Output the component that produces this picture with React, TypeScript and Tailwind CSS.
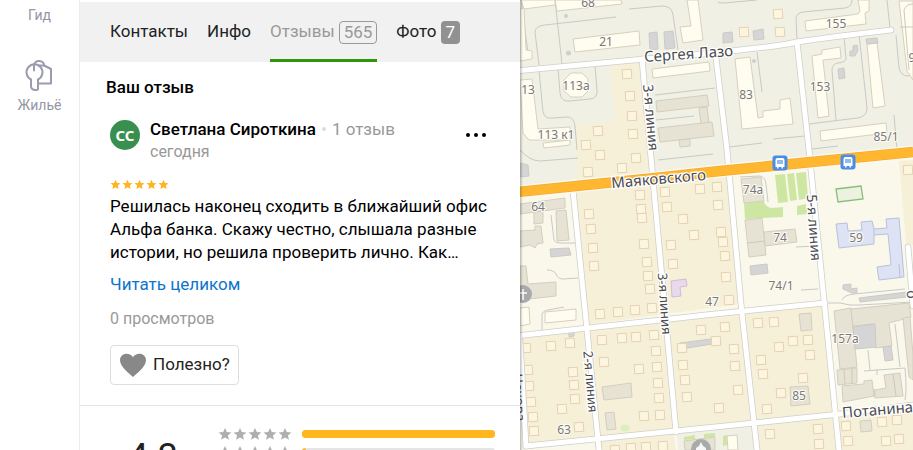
type Point = [number, number];

const STAR = "M12 1.5 L15.1 8.6 L23 9.3 L17 14.4 L18.8 22 L12 18 L5.2 22 L7 14.4 L1 9.3 L8.9 8.6 Z";

function Stars({ className, starClassName, label }: { className: string; starClassName: string; label: string }) {
  return (
    <div role="img" aria-label={label} className={className}>
      {[0, 1, 2, 3, 4].map((i) => (
        <svg key={i} viewBox="0 0 24 24" className={starClassName} fill="currentColor">
          <path d={STAR} />
        </svg>
      ))}
    </div>
  );
}

function KeysIcon() {
  return (
    <svg viewBox="0 0 30 36" className="h-9 w-[30px]" fill="none" stroke="#9a9cae" strokeWidth="2" strokeLinejoin="round" strokeLinecap="round">
      <path d="M10 8 A5.200 5.200 0 0 1 20.200 8.500 L27 12 V26.500 H15.500" />
      <path d="M7 22.500 A8 8 0 1 1 14 22.500 V32 Q14 33 12.500 33 H11 Q7 32.500 7 29 Z" />
      <path d="M10 8 V13.500" />
      <path d="M15.500 8.500 H20" />
    </svg>
  );
}

function Sidebar() {
  return (
    <nav className="flex w-20 shrink-0 flex-col items-center border-r border-[#ececec] bg-white pt-[5px] text-sm leading-5 text-[#9496a5]">
      <a href="#guide">Гид</a>
      <a href="#housing" className="mt-8 flex flex-col items-center">
        <KeysIcon />
        <span className="mt-0.5">Жильё</span>
      </a>
    </nav>
  );
}

function Tabs() {
  return (
    <nav className="mt-0.5 flex h-[60px] shrink-0 gap-[19px] bg-[#f1f1f1] pl-[30px] text-[17px] text-[#222]">
      <a href="#contacts" className="flex items-center">Контакты</a>
      <a href="#info" className="flex items-center">Инфо</a>
      <a href="#reviews" aria-current="page" className="flex items-center gap-1 border-b-[3px] border-[#2e9408] pt-[3px] text-[#999]">
        Отзывы
        <span className="rounded-[4px] border border-[#999] px-1 leading-[21px]">565</span>
      </a>
      <a href="#photos" className="flex items-center gap-1">
        Фото
        <span className="rounded-[4px] bg-[#919191] px-[5px] leading-[23px] text-white">7</span>
      </a>
    </nav>
  );
}

function Review() {
  return (
    <article className="px-[30px] pt-3">
      <header className="flex">
        <span className="mt-2.5 flex size-[30px] items-center justify-center rounded-full bg-[#398f4f] font-['Noto_Sans',sans-serif] text-[15px] font-bold text-white">
          СС
        </span>
        <div className="ml-2.5 pt-2 leading-[22px]">
          <div className="flex items-center whitespace-nowrap">
            <span className="font-medium">Светлана Сироткина</span>
            <span className="mx-1.5 size-1 rounded-full bg-[#dcdcdc]" />
            <span className="text-[#999]">1 отзыв</span>
          </div>
          <time className="block text-base leading-6 text-[#999]">сегодня</time>
        </div>
        <button type="button" aria-label="Ещё" className="-mr-px mt-[15px] ml-auto flex h-5 w-[30px] items-center justify-center gap-1">
          <span className="size-1 rounded-full bg-black" />
          <span className="size-1 rounded-full bg-black" />
          <span className="size-1 rounded-full bg-black" />
        </button>
      </header>
      <Stars label="Оценка 5 из 5" className="mt-[15px] flex gap-px text-[#ffb31f]" starClassName="size-[11px]" />
      <p className="mt-[5px] leading-[23px] text-black">
        Решилась наконец сходить в ближайший офис Альфа банка. Скажу честно, слышала разные истории, но решила проверить лично. Как…
      </p>
      <a href="#full" className="mt-2 block leading-[24px] text-[#0c74cd]">Читать целиком</a>
      <p className="mt-3 text-base leading-[22px] text-[#999]">0 просмотров</p>
      <button type="button" className="mt-[15px] flex h-10 items-center gap-1.5 rounded-[4px] border border-[#dedede] px-2 text-[#222]">
        <svg viewBox="0 0 28 26" className="h-[26px] w-7" fill="#888">
          <path d="M14 25 C11 22 1 15 1 8.2 C1 4.4 4 1.8 7.6 1.8 C10.4 1.8 12.8 3.2 14 5.2 C15.2 3.2 17.6 1.8 20.4 1.8 C24 1.8 27 4.4 27 8.2 C27 15 17 22 14 25 Z" />
        </svg>
        Полезно?
      </button>
    </article>
  );
}

function Rating() {
  return (
    <section className="mt-5 flex border-t border-[#e4e4e4] pt-[21px]">
      <div className="ml-12 w-[90px] pt-3 text-4xl leading-9 text-[#222]">4.3</div>
      <div className="flex grow flex-col gap-1 pr-[25px]">
        {[100, 2].map((share) => (
          <div key={share} className="flex items-center gap-2.5">
            <Stars label={share === 100 ? "5 звёзд" : "4 звезды"} className="flex gap-px text-[#afafaf]" starClassName="size-3.5" />
            <div className="h-2 grow overflow-hidden rounded-[3px] bg-[#e5e5e5]">
              <div className="h-full rounded-[3px] bg-[#ffb61f]" style={{ width: `${share}%` }} />
            </div>
          </div>
        ))}
      </div>
    </section>
  );
}

const zones: { d: string; fill: string }[] = [
  { d: "M520 192 L728 170 L913 152 V450 H520 Z", fill: "#faf8eb" },
  { d: "M610 65 L642 60 L653 178 L578 186 L575 125 L615 121 Z", fill: "#f6f0d9" },
  { d: "M574 187 L729 170 L741 304 L584 325 Z", fill: "#f6f0d9" },
  { d: "M520 336 L741 311 L754 422 L526 446 Z", fill: "#f6f0d9" },
  { d: "M745 311 L824 303 L834 415 L757 423 Z", fill: "#f6f0d9" },
  { d: "M600 439 L673 431 L676 450 H600 Z", fill: "#f6f0d9" },
  { d: "M756 424 L835 416 L840 450 H758 Z", fill: "#f6f0d9" },
  { d: "M838 417 L913 408 V450 H840 Z", fill: "#f6f0d9" },
  { d: "M899 161 L913 160 V245 L906 243 Z", fill: "#f6f0d9" },
  { d: "M677 431 L754 423 L758 450 H678 Z", fill: "#f1f0e4" },
];

const greens = [
  "M775 175 L785 174 L788 202 L778 203 Z",
  "M787 174 L794 173 L797 200 L790 201 Z",
  "M796 173 L806 172 L808 198 L799 200 Z",
  "M797 206 L806 204 L808 214 L797 215 Z",
  "M744 203 L763 200 Q766 208 772 208 L783 207 V217 L745 219 Z",
  "M684 437 L695 435 V439 L684 440 Z",
  "M704 434 L715 433 V437 L704 438 Z",
  "M723 436 L727 435 V445 L723 446 Z",
];

const thinPaths = [
  "M521 0 L529 60",
  "M555 0 L562 64",
  "M539 65 L535 32 Q535 26 545 25 L616 17",
  "M629 9 L662 6 Q672 6 673 15 L678 50",
  "M539 70 L543 112 Q545 119 552 118 L568 117 Q574 118 575 126 L577 150",
  "M558 68 L560 93 Q561 102 570 101 L590 99 Q598 98 597 90 L595 66",
  "M655 95 L715 88",
  "M656 120 L694 116",
  "M718 2 Q719 3 724 3 L757 0",
  "M797 40 L796 19 Q796 13 803 12 L845 8 Q852 7 852 0",
  "M757 52 L762 92",
  "M729 147 L762 143",
  "M773 139 L805 136",
  "M844 36 L846 59 Q846 62 838 63 Q832 64 832 70 L836 120",
  "M859 34 L867 108 Q867 117 857 118 L809 124",
  "M887 0 L890 28",
  "M896 35 L899 68 Q901 76 908 76 L913 75",
  "M894 115 L897 150",
  "M812 149 L838 146",
  "M520 150 Q530 161 540 161 L578 158",
  "M658 160 L713 154",
  "M551 215 L554 240 Q555 243 560 243 L576 243",
  "M547 270 Q554 270 556 274 Q558 279 563 279 L578 278",
  "M740 177 L759 176 Q765 176 766 184 L768 202",
  "M796 247 L815 246",
  "M801 290 L818 289",
  "M842 300 Q844 295 854 294 L905 289",
  "M542 330 V315 Q542 311 548 310 L564 307",
  "M868 350 L870 370",
  "M864 371 L905 368 Q907 390 905 400",
  "M895 324 L900 367",
  "M877 369 V375",
  "M827 303 L840 303 Q850 306 860 305 L913 302",
];

const whiteBuildings = [
  "M555 0 L557 11 L622 4 L621 0 Z",
  "M521 0 H555 V5 L524 9 Z",
  "M520 9 L524 8 L526 50 L532 51 V59 L520 61 Z",
  "M573 39 L639 31 L640 45 L575 52 Z",
  "M687 0 H698 L701 24 L703 40 L683 43 L680 27 L691 26 Z",
  "M571 73 L582 73 L588 79 V91 L582 97 H571 L564 91 V80 Z",
  "M520 80 L532 79 L538 129 L570 127 V140 L529 140 L523 133 Z",
  "M543 143 L570 140 V145 L544 148 Z",
  "M652 69 L709 62 L710 71 L653 78 Z",
  "M735 59 L750 57 L758 118 L763 117 V111 L780 109 V100 L790 98 L793 124 L742 129 Z",
  "M805 21 L858 14 L860 11 L858 0 H869 V11 L865 13 L866 24 L806 31 Z",
  "M812 56 L822 54 V50 L840 47 L841 58 L823 60 L829 116 L818 118 Z",
  "M867 44 L877 43 L885 106 L873 108 Z",
  "M820 131 L886 123 L887 133 L821 141 Z",
  "M899 1 H913 V80 L907 71 L902 26 Z",
  "M545 312 L576 309 V320 L545 323 Z",
  "M520 308 L529 307 L530 324 L520 326 Z",
  "M727 436 L737 435 L738 450 H728 Z",
];

const beigeBuildings = [
  "M656 101 L707 95 L709 106 L657 112 Z",
  "M699 108 L707 107 L709 123 L701 124 Z",
  "M658 128 L712 122 L714 136 L660 142 Z",
  "M679 140 L690 139 V146 L680 147 Z",
  "M520 204 L565 198 V208 L520 214 Z",
  "M534 212 L543 211 V223 L534 224 Z",
  "M556 211 L566 210 L569 240 L557 241 Z",
  "M520 231 L535 230 V226 L541 226 L543 243 L537 244 L535 248 L530 245 L520 247 Z",
  "M520 266 L526 266 L528 284 L556 282 V296 L520 300 Z",
  "M741 179 L761 177 L764 201 L744 203 Z",
  "M745 220 L762 218 L766 255 L749 257 Z",
  "M764 232 L795 229 L797 242 L765 246 Z",
  "M602 387 L631 383 L632 397 L604 400 Z",
  "M605 413 L614 412 L616 429 L607 430 Z",
  "M799 314 L811 313 L812 330 L801 331 Z",
  "M790 387 L808 386 L810 404 L791 406 Z",
  "M834 311 L851 308 L857 367 L840 369 Z",
  "M851 309 L909 303 L911 317 L889 323 L892 346 L875 348 L873 324 L853 326 Z",
  "M837 370 L857 368 V383 L838 385 Z",
  "M842 386 L864 384 V381 L872 380 L874 396 L843 402 Z",
  "M884 375 L900 373 L903 396 L875 398 V390 L886 388 Z",
  "M903 318 L910 317 L913 355 V380 L909 377 Z",
  "M860 421 L871 420 L872 431 L861 432 Z",
  "M684 441 L715 437 V450 H685 Z",
];

const grayBuildings = [
  "M649 33 L657 32 L658 49 L650 50 Z",
  "M664 32 L673 31 L675 48 L665 49 Z",
  "M723 33 L732 32 L733 42 L723 43 Z",
  "M753 31 L763 29 L764 39 L754 40 Z",
  "M866 39 L877 38 L878 43 L867 44 Z",
  "M838 69 L844 68 L845 78 L839 79 Z",
  "M850 51 L853 51 V46 L857 45 L858 50 L855 56 L850 56 Z",
  "M520 163 L528 165 L529 176 L520 177 Z",
  "M550 249 L569 248 L571 255 L551 257 Z",
  "M750 266 L767 264 L768 273 L751 275 Z",
  "M843 285 L851 284 V289 L857 288 V293 L852 293 L843 289 Z",
  "M859 298 L907 292 V297 L860 302 Z",
  "M680 343 L711 339 L712 344 L681 349 Z",
  "M569 333 L574 332 V336 L569 337 Z",
  "M853 327 L875 324 L876 347 L855 349 Z",
  "M883 347 L891 346 L893 360 L885 361 Z",
];

const roads = [
  "M520 70.500 L645 59",
  "M645 59 L715 53",
  "M714 53 L757 48 Q785 45 797 42 Q830 37 891 30",
  "M642 59 L664 300 L676 432",
  "M716 58 L727 150 L741 304 L757 450",
  "M797 42 L809 150 L824 300 L839 450",
  "M573 190 L584 300 L599 450",
  "M520 335.500 L715 314 L825 303",
  "M526 446 L715 427 L840 414 L913 405",
  "M908 247 L913 306",
  "M520 340 L526 446",
];

const houses: Point[] = [
  [627, 74], [630, 96], [632, 116], [633, 134], [598, 131], [586, 145],
  [778, 14], [780, 32], [744, 32], [600, 155], [636, 158], [622, 168], [588, 172],
  [640, 195], [641, 209], [642, 218], [589, 214], [591, 229], [593, 248], [594, 266],
  [644, 244], [647, 262], [648, 276], [650, 289], [665, 192], [667, 207], [700, 189],
  [683, 219], [694, 235], [671, 245], [673, 264], [717, 187], [718, 205], [721, 232],
  [723, 242], [725, 256], [726, 277], [729, 300], [908, 170],
  [600, 314], [618, 312], [635, 310], [652, 308],
  [526, 348], [551, 346], [570, 343], [528, 370], [529, 386], [531, 402], [533, 417], [534, 431],
  [573, 372], [574, 385], [575, 399], [562, 409], [579, 427],
  [602, 340], [622, 338], [636, 337], [654, 335], [604, 362], [656, 351], [657, 367], [658, 383],
  [659, 398], [660, 415], [644, 416], [639, 369],
  [701, 330], [682, 348], [683, 365], [685, 380], [687, 397],
  [725, 327], [716, 341], [734, 349], [735, 366], [738, 390], [719, 408],
  [758, 323], [774, 322], [779, 347], [793, 341], [808, 340], [761, 360], [810, 355], [763, 374],
  [803, 378], [781, 393], [767, 409],
  [770, 434], [818, 429], [819, 444], [846, 426], [848, 441], [882, 422], [897, 420], [886, 441], [899, 439],
  [615, 450], [631, 448], [646, 447], [663, 446],
];

const numbers: { x: number; y: number; text: string }[] = [
  { x: 588, y: 7, text: "68" }, { x: 606, y: 46, text: "21" }, { x: 576, y: 90, text: "113а" },
  { x: 528, y: 94, text: "13" }, { x: 556, y: 139, text: "113 к1" }, { x: 746, y: 99, text: "83" },
  { x: 836, y: 28, text: "155" }, { x: 820, y: 91, text: "153" }, { x: 886, y: 141, text: "85/1" },
  { x: 912, y: 62, text: "9" }, { x: 538, y: 211, text: "64" }, { x: 753, y: 194, text: "74а" },
  { x: 780, y: 242, text: "74" }, { x: 781, y: 290, text: "74/1" }, { x: 856, y: 242, text: "59" },
  { x: 712, y: 306, text: "47" }, { x: 564, y: 434, text: "63" }, { x: 799, y: 400, text: "85" },
  { x: 845, y: 343, text: "157а" },
];

const streets: { x: number; y: number; angle: number; text: string; size: number }[] = [
  { x: 689, y: 59, angle: -4, text: "Сергея Лазо", size: 15 },
  { x: 659, y: 184, angle: -5, text: "Маяковского", size: 15 },
  { x: 878, y: 415, angle: -5, text: "Потанина", size: 15 },
  { x: 646, y: 118, angle: 85, text: "3-я линия", size: 14 },
  { x: 660, y: 304, angle: 86, text: "3-я линия", size: 13 },
  { x: 809, y: 228, angle: 86, text: "5-я линия", size: 14 },
  { x: 586, y: 382, angle: 85, text: "2-я линия", size: 13 },
  { x: 514, y: 398, angle: 86, text: "Чехова", size: 14 },
  { x: 907, y: 295, angle: 84, text: "о", size: 14 },
];

function BusStop({ x, y }: { x: number; y: number }) {
  return (
    <g transform={`translate(${x} ${y})`}>
      <rect x="-7.500" y="-7.500" width="15" height="15" rx="3" fill="#4b8de4" />
      <path d="M-4.500 4 V-3 Q-4.500 -5 -2.500 -5 H2.500 Q4.500 -5 4.500 -3 V4 H3 V5.500 H1.500 V4 H-1.500 V5.500 H-3 V4 Z" fill="#fff" />
      <path d="M-3 -3 H3 V1 H-3 Z" fill="#4b8de4" opacity="0.6" />
    </g>
  );
}

function CityMap() {
  return (
    <svg role="img" aria-label="Карта" viewBox="520 0 393 450" preserveAspectRatio="xMinYMin slice" className="block size-full font-['Noto_Sans',sans-serif]">
      <defs>
        <linearGradient id="edge" x1="0" x2="1" y1="0" y2="0">
          <stop offset="0" stopColor="#000" stopOpacity="0.25" />
          <stop offset="1" stopColor="#000" stopOpacity="0" />
        </linearGradient>
      </defs>
      <rect x="520" width="393" height="450" fill="#f1f0e4" />
      {zones.map((z) => <path key={z.d} d={z.d} fill={z.fill} />)}
      {greens.map((d) => <path key={d} d={d} fill="#cde7a3" />)}
      <ellipse cx="625" cy="428" rx="5" ry="3.500" fill="#dcefbd" />
      <g fill="none" stroke="#c9cac8" strokeWidth="1">
        {thinPaths.map((d) => <path key={d} d={d} />)}
      </g>
      <g fill="#fffdf0" stroke="#d8d0bd" strokeWidth="1">
        {whiteBuildings.map((d) => <path key={d} d={d} />)}
      </g>
      <g fill="#e6e3d5" stroke="#d3cebf" strokeWidth="1">
        {beigeBuildings.map((d) => <path key={d} d={d} />)}
      </g>
      <g fill="#d5d5d6" stroke="#cbcac6" strokeWidth="1">
        {grayBuildings.map((d) => <path key={d} d={d} />)}
      </g>
      <g stroke="#cfc8b8" strokeWidth="1" fill="none">
        <path d="M748 243 L764 241 M844 370 L845 384 M852 369 V383 M874 389 V397 M893 374 L896 396 M900 27 H913 M904 10 Q906 4 913 4 M904 10 L909 70" />
      </g>
      <path d="M836 224 L847 223 L848 231 L862 230 L861 222 L872 221 L874 229 L887 228 L886 219 L899 218 L904 277 L879 280 L877 267 L891 265 L888 234 L874 235 V244 L839 248 Z" fill="#dde2f5" stroke="#b9c1da" strokeWidth="1" />
      <path d="M874 229 V235 M899 264 L900 277" stroke="#b9c1da" />
      <path d="M836 189 L861 186 L863 199 L838 202 Z" fill="#ecf2df" stroke="#86bd7b" strokeWidth="1.300" />
      <path d="M671 281 L686 279 L687 286 L680 287 L681 296 L672 297 Z" fill="#e8d9ec" stroke="#d2bdd6" />
      <g fill="#fef5df" stroke="#e3d3b4" strokeWidth="1">
        {houses.map(([x, y]) => (
          <rect key={`${x}-${y}`} x={x - 4.5} y={y - 4.5} width="9" height="9" transform={`rotate(-4 ${x} ${y})`} />
        ))}
      </g>
      <path d="M566 53 a2.500 2.500 0 1 1 5 0 a2.500 2.500 0 1 1 -5 0 M564 16 a2 2 0 1 1 4 0 a2 2 0 1 1 -4 0 M752 61 a2 2 0 1 1 4 0 a2 2 0 1 1 -4 0" fill="#cecfcf" />
      <g fill="none" stroke="#cfcfc9" strokeWidth="6.500" strokeLinecap="round">
        {roads.map((d) => <path key={d} d={d} />)}
      </g>
      <g fill="none" stroke="#fff" strokeWidth="5" strokeLinecap="round">
        {roads.map((d) => <path key={d} d={d} />)}
      </g>
      <path d="M518 192 L655 178 L720 171 L913 152" fill="none" stroke="#fffaf0" strokeWidth="13" />
      <path d="M518 192 L655 178 L720 171 L913 152" fill="none" stroke="#f2ab35" strokeWidth="10.500" />
      <path d="M518 192 L655 178 L720 171 L913 152" fill="none" stroke="#ffb730" strokeWidth="9" />
      <BusStop x={780} y={163} />
      <BusStop x={848} y={162} />
      <g fill="#aaa">
        <circle cx="523" cy="294" r="9" />
        <circle cx="701" cy="449" r="10" />
      </g>
      <path d="M523 289 V300 M519 293 H527" stroke="#fff" strokeWidth="1.500" />
      <path d="M696 450 V448 L699 446 L701 442 L703 446 L706 448 V450 Z" fill="#f8f8f8" />
      <g fill="#77777c" stroke="#fffdf2" strokeWidth="2" paintOrder="stroke" textAnchor="middle" fontSize="12">
        {numbers.map((n) => <text key={n.text} x={n.x} y={n.y}>{n.text}</text>)}
      </g>
      <g fill="#4b4b50" stroke="#fff" strokeWidth="2.500" paintOrder="stroke" textAnchor="middle">
        {streets.map((s) => (
          <text key={`${s.text}-${s.y}`} x={s.x} y={s.y} fontSize={s.size} transform={`rotate(${s.angle} ${s.x} ${s.y})`}>{s.text}</text>
        ))}
      </g>
      <rect x="520" width="3" height="450" fill="url(#edge)" />
    </svg>
  );
}

export default function App() {
  return (
    <div className="flex h-screen overflow-hidden bg-white font-['Roboto',sans-serif] text-[17px] text-black">
      <Sidebar />
      <main className="flex w-[440px] shrink-0 flex-col overflow-hidden bg-white">
        <Tabs />
        <h2 className="mt-3.5 pl-[26px] leading-[22px] font-medium">Ваш отзыв</h2>
        <Review />
        <Rating />
      </main>
      <aside className="min-w-0 grow overflow-hidden">
        <CityMap />
      </aside>
    </div>
  );
}
